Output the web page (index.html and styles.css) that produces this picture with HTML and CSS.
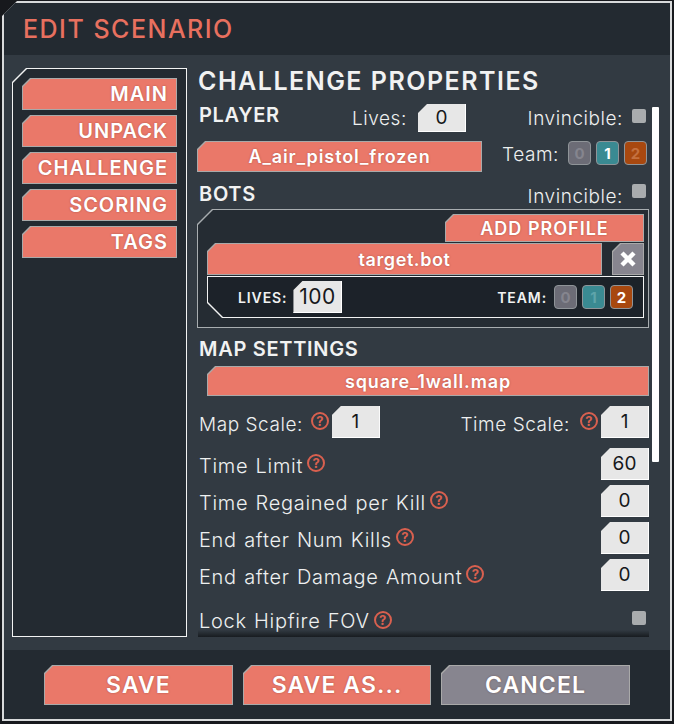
FILE: index.html
```html
<!DOCTYPE html>
<html lang="en">
<head>
    <meta charset="UTF-8">
    <meta name="viewport" content="width=device-width, initial-scale=1.0">
    <title>Edit Scenario</title>
    <link rel="stylesheet" href="styles.css">
</head>
<body>
    <div class="window">
        <div class="head"><h1>EDIT SCENARIO</h1></div>

        <div class="content">
            <nav class="side">
                <a class="btn tab">MAIN</a>
                <a class="btn tab">UNPACK</a>
                <a class="btn tab">CHALLENGE</a>
                <a class="btn tab">SCORING</a>
                <a class="btn tab">TAGS</a>
            </nav>

            <div class="main">
                <h2>CHALLENGE PROPERTIES</h2>

                <div class="row player-row">
                    <h3>PLAYER</h3>
                    <div class="lives">
                        <span class="label">Lives:</span>
                        <span class="field wide">0</span>
                    </div>
                    <div class="inv">
                        <span class="label">Invincible:</span>
                        <span class="check"></span>
                    </div>
                </div>

                <div class="row profile-row">
                    <a class="btn pick">A_air_pistol_frozen</a>
                    <div class="team">
                        <span class="label">Team:</span>
                        <span class="chip grey">0</span>
                        <span class="chip teal on">1</span>
                        <span class="chip rust">2</span>
                    </div>
                </div>

                <div class="row bots-row">
                    <h3>BOTS</h3>
                    <div class="inv">
                        <span class="label">Invincible:</span>
                        <span class="check"></span>
                    </div>
                </div>

                <div class="bots-box">
                    <a class="btn add">ADD PROFILE</a>
                    <div class="bot-line">
                        <a class="btn bot-name">target.bot</a>
                        <a class="btn close">
                            <svg width="18" height="18" viewBox="0 0 18 18"><path d="M3 3 L15 15 M15 3 L3 15" stroke="#fff" stroke-width="4.4" fill="none"/></svg>
                        </a>
                    </div>
                    <div class="bot-opts">
                        <div class="bot-lives">
                            <b>LIVES:</b>
                            <span class="field big">100</span>
                        </div>
                        <div class="team small">
                            <b>TEAM:</b>
                            <span class="chip grey">0</span>
                            <span class="chip teal">1</span>
                            <span class="chip rust on">2</span>
                        </div>
                    </div>
                </div>

                <h3 class="map-title">MAP SETTINGS</h3>
                <a class="btn map">square_1wall.map</a>

                <div class="row scale-row">
                    <div class="pair">
                        <span class="label">Map Scale:</span>
                        <span class="help">?</span>
                        <span class="field">1</span>
                    </div>
                    <div class="pair">
                        <span class="label">Time Scale:</span>
                        <span class="help">?</span>
                        <span class="field">1</span>
                    </div>
                </div>

                <div class="row setting">
                    <div class="name"><span class="label">Time Limit</span><span class="help">?</span></div>
                    <span class="field">60</span>
                </div>
                <div class="row setting">
                    <div class="name"><span class="label">Time Regained per Kill</span><span class="help">?</span></div>
                    <span class="field">0</span>
                </div>
                <div class="row setting">
                    <div class="name"><span class="label">End after Num Kills</span><span class="help">?</span></div>
                    <span class="field">0</span>
                </div>
                <div class="row setting">
                    <div class="name"><span class="label">End after Damage Amount</span><span class="help">?</span></div>
                    <span class="field">0</span>
                </div>
                <div class="row lock">
                    <div class="name"><span class="label">Lock Hipfire FOV</span><span class="help">?</span></div>
                    <span class="check"></span>
                </div>
                <div class="fade"></div>
            </div>

            <div class="scrollbar"></div>
        </div>

        <div class="foot">
            <a class="btn big-btn">SAVE</a>
            <a class="btn big-btn mid">SAVE AS...</a>
            <a class="btn big-btn cancel">CANCEL</a>
        </div>
    </div>
</body>
</html>
```

FILE: styles.css
```css
/* Reset */
body, h1, h2, h3 {
    margin: 0;
    padding: 0;
}

body {
    width: 674px;
    height: 724px;
    overflow: hidden;
    background: #17191d;
    font-family: "Inter", "Liberation Sans", sans-serif;
    color: #f1f2f2;
}

/* Outer frame, chamfered top left */
.window {
    --cut: 15px;
    position: relative;
    isolation: isolate;
    width: 670px;
    height: 720px;
    margin: 1px 2px 3px;
    display: flex;
    flex-direction: column;
    background: #d8dadb;
    clip-path: polygon(var(--cut) 0, 100% 0, 100% 100%, 0 100%, 0 var(--cut));
}

.window:before {
    content: '';
    position: absolute;
    inset: 2px;
    z-index: -1;
    background: #323a42;
    clip-path: polygon(var(--cut) 0, 100% 0, 100% 100%, 0 100%, 0 var(--cut));
}

.head {
    height: 52px;
    margin: 2px 2px 0;
    padding-left: 19px;
    display: flex;
    align-items: center;
    background: #232a31;
}

h1 {
    font-size: 25px;
    font-weight: 500;
    letter-spacing: 1.5px;
    color: #e8705f;
}

.content {
    position: relative;
    flex: 1;
    display: flex;
    gap: 11px;
    padding: 13px 0 0 10px;
}

/* Sidebar */
.side {
    position: relative;
    isolation: isolate;
    --cut: 14px;
    box-sizing: border-box;
    width: 175px;
    height: 569px;
    padding: 10px 10px 0 10px;
    display: flex;
    flex-direction: column;
    gap: 5px;
    background: #f2f3f3;
    clip-path: polygon(var(--cut) 0, 100% 0, 100% 100%, 0 100%, 0 var(--cut));
}

.side:before, .bots-box:before, .bot-opts:before {
    content: '';
    position: absolute;
    inset: 1px;
    z-index: -1;
    background: #232a31;
    clip-path: polygon(var(--cut) 0, 100% 0, 100% 100%, 0 100%, 0 var(--cut));
}

/* Salmon buttons */
.btn {
    --cut: 8px;
    --fill: #ea7869;
    position: relative;
    isolation: isolate;
    box-sizing: border-box;
    display: flex;
    align-items: center;
    justify-content: center;
    background: #a9a9a9;
    font-weight: 600;
    color: #fff;
    text-shadow: 0 0 2px rgba(90, 40, 30, 0.45);
    clip-path: polygon(var(--cut) 0, 100% 0, 100% 100%, 0 100%, 0 var(--cut));
}

.btn:before {
    content: '';
    position: absolute;
    inset: 1px;
    z-index: -1;
    background: var(--fill);
    clip-path: polygon(var(--cut) 0, 100% 0, 100% 100%, 0 100%, 0 var(--cut));
}

.tab {
    height: 32px;
    justify-content: flex-end;
    padding-right: 9px;
    font-size: 20px;
    letter-spacing: 1px;
}

/* Right column */
.main {
    position: relative;
    width: 451px;
}

h2 {
    height: 27px;
    font-size: 25px;
    line-height: 27px;
    font-weight: 600;
    letter-spacing: 1.5px;
    white-space: nowrap;
}

h3 {
    font-size: 20px;
    font-weight: 600;
    letter-spacing: 0.7px;
}

.row {
    display: flex;
    align-items: center;
    justify-content: space-between;
}

.label {
    font-size: 19px;
    font-weight: 300;
    letter-spacing: 0.55px;
    white-space: nowrap;
    color: #eef0f0;
}

.name .label {
    font-size: 20px;
    letter-spacing: 0.7px;
    word-spacing: 1px;
}

.player-row {
    height: 30px;
    margin-top: 8px;
    padding-left: 1px;
    justify-content: flex-start;
}

.player-row h3 {
    width: 153px;
    margin-bottom: 6px;
}

.lives {
    display: flex;
    align-items: center;
    justify-content: space-between;
    width: 114px;
}

.inv {
    display: flex;
    gap: 9px;
    align-items: flex-start;
    margin: 0 3px 0 auto;
}

.inv .check {
    margin-top: 2px;
}

.bots-row .inv .label {
    margin-top: 3px;
}

.check {
    width: 14px;
    height: 14px;
    border-radius: 2px;
    background: #a9acae;
}

/* Number boxes */
.field {
    --cut: 9px;
    box-sizing: border-box;
    width: 48px;
    height: 32px;
    display: flex;
    align-items: center;
    justify-content: center;
    background: #e7e7e7;
    border-right: 1px solid #fff;
    border-bottom: 1px solid #fff;
    font-size: 19px;
    color: #16181b;
    clip-path: polygon(var(--cut) 0, 100% 0, 100% 100%, 0 100%, 0 var(--cut));
}

.field.wide {
    height: 28px;
}

.field.big {
    width: 49px;
    font-size: 21px;
    letter-spacing: 0.5px;
}

.profile-row {
    height: 32px;
    margin-top: 8px;
    align-items: flex-start;
}

.pick {
    width: 285px;
    height: 31px;
    margin-left: -1px;
    font-size: 18px;
    letter-spacing: 0.9px;
}

.team {
    display: flex;
    align-items: flex-start;
    gap: 5px;
    margin-right: 2px;
}

.team .label {
    margin: 2px 4px 0 0;
}

.chip {
    box-sizing: border-box;
    width: 23px;
    height: 24px;
    display: flex;
    align-items: center;
    justify-content: center;
    border: 1px solid #8f9498;
    border-radius: 4px;
    font-size: 15px;
    font-weight: 700;
}

.chip.grey { background: #6c6c76; color: #85858e; }
.chip.teal { background: #3a8a92; color: #5fa4aa; }
.chip.rust { background: #a8480f; color: #c4703f; }
.chip.on { color: #fff; }

.bots-row {
    height: 27px;
    margin-top: 9px;
    padding-left: 1px;
    align-items: flex-start;
}

.bots-box {
    --cut: 15px;
    position: relative;
    isolation: isolate;
    box-sizing: border-box;
    width: 452px;
    height: 119px;
    margin-left: -1px;
    padding: 5px 5px 0 10px;
    background: #a8adb0;
    clip-path: polygon(var(--cut) 0, 100% 0, 100% 100%, 0 100%, 0 var(--cut));
}

.bots-box:before {
    background: #252c33;
}

.add {
    width: 199px;
    height: 28px;
    margin: 0 0 1px auto;
    font-size: 18px;
    letter-spacing: 1px;
}

.bot-line {
    display: flex;
    justify-content: space-between;
}

.bot-name {
    width: 395px;
    height: 32px;
    font-size: 18px;
    letter-spacing: 0.6px;
}

.close {
    --fill: #87858f;
    width: 32px;
    height: 32px;
}

/* Flipped chamfer here, bottom left */
.bot-opts {
    --cut: 15px;
    position: relative;
    isolation: isolate;
    box-sizing: border-box;
    height: 42px;
    margin-top: 1px;
    display: flex;
    align-items: center;
    justify-content: space-between;
    padding: 0 11px 0 31px;
    background: #f2f3f3;
    clip-path: polygon(0 0, 100% 0, 100% 100%, var(--cut) 100%, 0 calc(100% - var(--cut)));
}

.bot-opts:before {
    background: #1c2229;
    clip-path: polygon(0 0, 100% 0, 100% 100%, var(--cut) 100%, 0 calc(100% - var(--cut)));
}

.bot-opts b {
    font-size: 14px;
    font-weight: 600;
    letter-spacing: 0.9px;
}

.bot-lives {
    display: flex;
    align-items: center;
    gap: 6px;
}

.small {
    margin-right: 0;
    align-items: center;
}

.small b {
    margin-right: 2px;
}

.map-title {
    height: 24px;
    line-height: 24px;
    margin: 9px 0 0 1px;
}

.map {
    width: 442px;
    height: 30px;
    margin: 5px 0 0 9px;
    font-size: 18px;
    letter-spacing: 0.85px;
}

.pair {
    display: flex;
    align-items: center;
}

.pair .help {
    margin: 0 3px 3px 10px;
}

.pair:first-child .help {
    margin-left: 8px;
}

.scale-row, .setting {
    height: 32px;
    padding-left: 1px;
}

.scale-row {
    margin-top: 10px;
}

.setting {
    margin-top: 5px;
}

.scale-row + .setting {
    margin-top: 10px;
}

.scale-row .label, .setting .label {
    margin-top: 4px;
}

.name {
    display: flex;
    align-items: center;
    gap: 4px;
}

/* Little question mark in a ring */
.help {
    box-sizing: border-box;
    width: 18px;
    height: 18px;
    margin-bottom: 3px;
    flex: none;
    display: flex;
    align-items: center;
    justify-content: center;
    border: 2px solid #d9604f;
    border-radius: 50%;
    font-size: 13px;
    font-weight: 700;
    color: #d9604f;
}

.lock {
    height: 32px;
    margin-top: 14px;
    padding-left: 1px;
}

.lock .check {
    margin: -6px 3px 0 0;
}

.lock + .fade {
    position: absolute;
    left: 0;
    right: 0;
    top: 562px;
    height: 7px;
    background: linear-gradient(rgba(22, 26, 30, 0), rgba(22, 26, 30, 0.95));
}

.scrollbar {
    position: absolute;
    left: 650px;
    top: 52px;
    width: 7px;
    height: 355px;
    border-radius: 1px;
    background: #fff;
}

/* Bottom buttons */
.foot {
    height: 69px;
    margin: 0 2px 2px;
    padding: 15px 0 0 40px;
    box-sizing: border-box;
    display: flex;
    gap: 10px;
    background: #232a31;
}

.big-btn {
    width: 189px;
    height: 40px;
    font-size: 23px;
    letter-spacing: 1.1px;
}

.mid {
    width: 188px;
}

.cancel {
    --fill: #87858f;
}
```
